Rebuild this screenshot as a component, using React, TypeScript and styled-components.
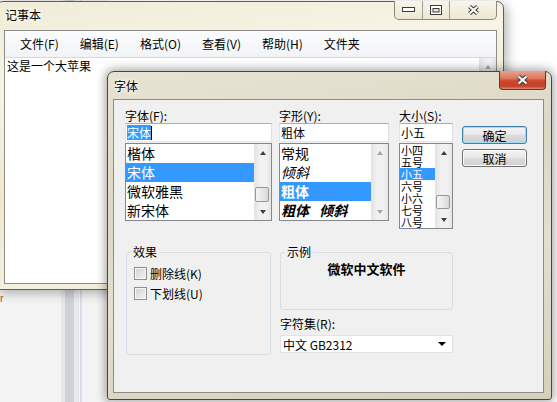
import styled, { createGlobalStyle } from 'styled-components';

const CJK = `"Noto Sans CJK SC", "Liberation Sans", sans-serif`;

const GlobalStyle = createGlobalStyle`
  html, body { margin: 0; padding: 0; background: #ffffff; }
  body { font-family: ${CJK}; font-size: 12px; color: #000; }
  * { box-sizing: border-box; }
`;

const Desktop = styled.div`
  position: relative;
  width: 557px;
  height: 402px;
  overflow: hidden;
  background: #ffffff;
`;

// the browser page that peeks out under the notepad window
const BehindPage = styled.div`
  position: absolute;
  left: 0;
  top: 0;
  width: 110px;
  height: 402px;
  background: linear-gradient(
    90deg,
    #f4f4f4 0 61px,
    #e7e7ef 61px 65px,
    #d1d1d8 65px 74px,
    #e9e9f0 74px 79px,
    #f4f4f4 79px 80px,
    #dcdce8 80px 82px,
    #f4f4f4 82px
  );
`;

const BehindText = styled.div`
  margin: 292px 0 0 0;
  color: #c2502a;
  font-family: "Liberation Sans", sans-serif;
  font-size: 11px;
`;

/* ---------- notepad ---------- */

const NotepadWindow = styled.div`
  position: absolute;
  left: -4px;
  top: 1px;
  width: 508px;
  height: 289px;
  display: flex;
  flex-direction: column;
  padding: 0 6px 5px 7px;
  border: 1px solid #5f5e57;
  border-radius: 7px 7px 0 0;
  background: linear-gradient(172deg, #f1ecd6 0%, #f7f4e6 25%, #eee8ce 55%, #f4f0de 80%, #ede6cb 100%);
  box-shadow: 3px 3px 12px rgba(0, 0, 0, 0.3);
`;

const TitleRow = styled.div<{ $h: number }>`
  height: ${(p) => p.$h}px;
  flex: none;
  display: flex;
  justify-content: space-between;
  align-items: flex-start;
`;

const WindowTitle = styled.div<{ $top: number }>`
  margin-top: ${(p) => p.$top}px;
  padding-left: 1px;
  line-height: 14px;
  font-size: 12px;
  text-shadow: 0 0 6px #fff, 0 0 3px #fff;
`;

const CaptionGroup = styled.div`
  display: flex;
  height: 19px;
  margin-top: -1px;
  border: 1px solid #8b8980;
  border-top: none;
  border-radius: 0 0 5px 5px;
  background: linear-gradient(#f8f6ec, #ece7d2);
  overflow: hidden;
`;

const CaptionButton = styled.div<{ $w: number }>`
  width: ${(p) => p.$w}px;
  display: flex;
  align-items: center;
  justify-content: center;
  & + & {
    border-left: 1px solid #a3a197;
  }
`;

const NotepadClient = styled.div`
  flex: 1;
  display: flex;
  flex-direction: column;
  border: 1px solid #8c8d88;
  background: #fff;
`;

const MenuBar = styled.div`
  height: 27px;
  flex: none;
  display: flex;
  align-items: center;
  padding-left: 5px;
  background: linear-gradient(#fbfcfd, #f1f3f6);
  border-bottom: 1px solid #d8d8d8;
`;

const MenuItem = styled.span`
  padding: 0 10px;
  margin-right: 1px;
  line-height: 18px;
  font-size: 12px;
`;

const EditArea = styled.div`
  flex: 1;
  display: flex;
`;

const EditText = styled.div`
  flex: 1;
  padding: 0 2px;
  line-height: 16px;
  font-size: 12px;
`;

/* ---------- scrollbars ---------- */

const ScrollBar = styled.div`
  width: 17px;
  flex: none;
  display: flex;
  flex-direction: column;
  background: linear-gradient(90deg, #e2e2e2, #f1f1f1 35%, #f1f1f1 70%, #e6e6e6);
`;

const ScrollArrow = styled.div`
  height: 17px;
  flex: none;
  display: flex;
  align-items: center;
  justify-content: center;
`;

const ArrowGlyph = styled.span<{ $dir: 'up' | 'down'; $disabled?: boolean }>`
  width: 0;
  height: 0;
  border-left: 3.5px solid transparent;
  border-right: 3.5px solid transparent;
  ${(p) =>
    p.$dir === 'up'
      ? `border-bottom: 4px solid ${p.$disabled ? '#a6a6a6' : '#3f3f3f'};`
      : `border-top: 4px solid ${p.$disabled ? '#a6a6a6' : '#3f3f3f'};`}
`;

const ScrollTrack = styled.div`
  flex: 1;
  display: flex;
  flex-direction: column;
`;

const ScrollThumb = styled.div<{ $offset: number; $size: number }>`
  margin: ${(p) => p.$offset}px 2px 0 1px;
  height: ${(p) => p.$size}px;
  border: 1px solid #979797;
  border-radius: 2px;
  background: linear-gradient(90deg, #f4f4f4, #e9e9e9 50%, #d8d8d8);
`;

function Scroller({ thumb, disabled }: { thumb?: [number, number]; disabled?: boolean }) {
  return (
    <ScrollBar>
      <ScrollArrow>
        <ArrowGlyph $dir="up" $disabled={disabled} />
      </ScrollArrow>
      <ScrollTrack>{thumb && <ScrollThumb $offset={thumb[0]} $size={thumb[1]} />}</ScrollTrack>
      <ScrollArrow>
        <ArrowGlyph $dir="down" $disabled={disabled} />
      </ScrollArrow>
    </ScrollBar>
  );
}

/* ---------- font dialog ---------- */

const FontDialog = styled.div`
  position: absolute;
  left: 107px;
  top: 71px;
  width: 445px;
  height: 329px;
  display: flex;
  flex-direction: column;
  padding: 0 7px 6px 5px;
  border: 1px solid #47463f;
  border-radius: 7px 7px 3px 3px;
  background: linear-gradient(170deg, #e7e3d3 0%, #ddd8c4 35%, #e3dfcf 60%, #d6d0ba 100%);
  box-shadow: 0 0 10px 2px rgba(0, 0, 0, 0.35);
`;

const RedClose = styled.div`
  width: 47px;
  height: 19px;
  margin: -1px -2px 0 0;
  display: flex;
  align-items: center;
  justify-content: center;
  border: 1px solid #5b3a30;
  border-top: none;
  border-radius: 0 0 4px 4px;
  background: linear-gradient(#e9a090 0%, #de7a62 40%, #cc4528 55%, #c4432b 85%, #de8a72 100%);
`;

const DialogClient = styled.div`
  flex: 1;
  display: flex;
  flex-direction: column;
  padding: 8px 0 0 11px;
  background: #f0f0f0;
  border: 1px solid #8f8c83;
`;

const TopRow = styled.div`
  height: 122px;
  flex: none;
  display: flex;
`;

const FieldColumn = styled.div<{ $w: number; $mr?: number }>`
  width: ${(p) => p.$w}px;
  margin-right: ${(p) => p.$mr ?? 0}px;
  flex: none;
  display: flex;
  flex-direction: column;
`;

const FieldLabel = styled.div`
  height: 15px;
  line-height: 15px;
  font-size: 12px;
  white-space: nowrap;
`;

const TextBox = styled.div`
  height: 19px;
  display: flex;
  align-items: center;
  padding: 0 1px;
  background: #fff;
  border: 1px solid;
  border-color: #abadb3 #dbdfe6 #e3e9ef #e2e3ea;
  font-size: 12px;
  white-space: nowrap;
`;

const Selected = styled.span`
  background: #3399ff;
  color: #fff;
  line-height: 15px;
`;

const Caret = styled.span`
  width: 1px;
  height: 14px;
  background: #000;
`;

const ListBox = styled.div<{ $h: number }>`
  height: ${(p) => p.$h}px;
  margin-top: 1px;
  display: flex;
  border: 1px solid #828790;
  background: #fff;
  overflow: hidden;
`;

const ListItems = styled.div`
  flex: 1;
  overflow: hidden;
`;

const ListItem = styled.div<{
  $selected?: boolean;
  $h: number;
  $size: number;
  $bold?: boolean;
  $italic?: boolean;
}>`
  height: ${(p) => p.$h}px;
  line-height: ${(p) => p.$h}px;
  padding-left: 1px;
  font-size: ${(p) => p.$size}px;
  font-weight: ${(p) => (p.$bold ? 700 : 400)};
  font-style: ${(p) => (p.$italic ? 'italic' : 'normal')};
  white-space: pre;
  background: ${(p) => (p.$selected ? '#3399ff' : 'transparent')};
  color: ${(p) => (p.$selected ? '#fff' : '#000')};
`;

const ButtonColumn = styled.div`
  width: 65px;
  flex: none;
  display: flex;
  flex-direction: column;
  gap: 5px;
  padding-top: 18px;
`;

const PushButton = styled.div<{ $default?: boolean }>`
  height: 18px;
  display: flex;
  align-items: center;
  justify-content: center;
  font-size: 12px;
  border: 1px solid ${(p) => (p.$default ? '#3c7fb1' : '#707070')};
  border-radius: 3px;
  background: linear-gradient(#f2f2f2 0%, #ebebeb 45%, #dddddd 50%, #cfcfcf 100%);
  box-shadow: inset 0 0 0 1px ${(p) => (p.$default ? '#9fdcf7' : '#fbfbfb')};
`;

const LowerRow = styled.div`
  margin: 15px 0 0 1px;
  display: flex;
`;

const GroupBox = styled.fieldset<{ $w: number; $h: number }>`
  width: ${(p) => p.$w}px;
  height: ${(p) => p.$h}px;
  margin: 0;
  padding: 0 4px;
  min-width: 0;
  border: 1px solid #d5dfe5;
  border-radius: 3px;
  display: flex;
  flex-direction: column;
`;

const GroupLegend = styled.legend`
  padding: 0 2px;
  font-size: 12px;
  line-height: 14px;
`;

const CheckList = styled.div`
  padding: 4px 0 0 3px;
  display: flex;
  flex-direction: column;
`;

const CheckRow = styled.div`
  height: 20px;
  display: flex;
  align-items: center;
  gap: 3px;
  font-size: 12px;
`;

const CheckBox = styled.span`
  width: 13px;
  height: 13px;
  border: 1px solid #8e8f8f;
  background: linear-gradient(135deg, #cfd1d4, #f4f4f4);
  box-shadow: inset 0 0 0 1px #f6f6f6;
`;

const RightColumn = styled.div`
  width: 173px;
  margin-left: 9px;
  display: flex;
  flex-direction: column;
`;

const SampleText = styled.div`
  flex: 1;
  display: flex;
  align-items: center;
  justify-content: center;
  padding-bottom: 2px;
  font-size: 13px;
  font-weight: 700;
`;

const CharsetLabel = styled.div`
  margin-top: 7px;
  line-height: 14px;
  font-size: 12px;
`;

const ComboBox = styled.div`
  height: 18px;
  margin-top: 4px;
  display: flex;
  align-items: center;
  justify-content: space-between;
  padding: 0 6px 0 2px;
  background: #fff;
  border: 1px solid #dfe3e8;
  font-size: 12px;
`;

const DropArrow = styled.span`
  width: 0;
  height: 0;
  border-left: 4px solid transparent;
  border-right: 4px solid transparent;
  border-top: 4px solid #000;
`;

/* ---------- glyphs ---------- */

const CloseX = () => (
  <svg width="13" height="10" viewBox="0 0 13 10">
    <path d="M2.5 1.5 L10.5 8.5 M10.5 1.5 L2.5 8.5" stroke="#3b3b3b" strokeWidth="4.2" />
    <path d="M2.5 1.5 L10.5 8.5 M10.5 1.5 L2.5 8.5" stroke="#ffffff" strokeWidth="2.2" />
  </svg>
);

const MinGlyph = () => (
  <svg width="13" height="6" viewBox="0 0 13 6">
    <rect x="0.5" y="0.5" width="12" height="4" fill="#fff" stroke="#3b3b3b" />
  </svg>
);

const MaxGlyph = () => (
  <svg width="12" height="10" viewBox="0 0 12 10">
    <rect x="0.5" y="0.5" width="11" height="9" fill="#fff" stroke="#3b3b3b" />
    <rect x="3" y="3.5" width="6" height="3.5" fill="#e8e4d2" stroke="#3b3b3b" />
  </svg>
);

const menus = ['文件(F)', '编辑(E)', '格式(O)', '查看(V)', '帮助(H)', '文件夹'];

const fonts = [
  { name: '楷体' },
  { name: '宋体', selected: true },
  { name: '微软雅黑' },
  { name: '新宋体' },
];

const styles = [
  { name: '常规' },
  { name: '倾斜', italic: true },
  { name: '粗体', bold: true, selected: true },
  { name: '粗体\u2002 倾斜', bold: true, italic: true },
];

const sizes = ['小四', '五号', '小五', '六号', '小六', '七号', '八号'];

export default function App() {
  return (
    <>
      <GlobalStyle />
      <Desktop>
        <BehindPage>
          <BehindText>r</BehindText>
        </BehindPage>

        <NotepadWindow>
          <TitleRow $h={28}>
            <WindowTitle $top={6}>记事本</WindowTitle>
            <CaptionGroup>
              <CaptionButton $w={27}>
                <MinGlyph />
              </CaptionButton>
              <CaptionButton $w={27}>
                <MaxGlyph />
              </CaptionButton>
              <CaptionButton $w={47}>
                <CloseX />
              </CaptionButton>
            </CaptionGroup>
          </TitleRow>
          <NotepadClient>
            <MenuBar>
              {menus.map((m) => (
                <MenuItem key={m}>{m}</MenuItem>
              ))}
            </MenuBar>
            <EditArea>
              <EditText>这是一个大苹果</EditText>
              <Scroller disabled />
            </EditArea>
          </NotepadClient>
        </NotepadWindow>

        <FontDialog>
          <TitleRow $h={27}>
            <WindowTitle $top={7}>字体</WindowTitle>
            <RedClose>
              <CloseX />
            </RedClose>
          </TitleRow>
          <DialogClient>
            <TopRow>
              <FieldColumn $w={147} $mr={7}>
                <FieldLabel>字体(F):</FieldLabel>
                <TextBox>
                  <Selected>宋体</Selected>
                  <Caret />
                </TextBox>
                <ListBox $h={78}>
                  <ListItems>
                    {fonts.map((f) => (
                      <ListItem key={f.name} $h={19} $size={14} $selected={f.selected}>
                        {f.name}
                      </ListItem>
                    ))}
                  </ListItems>
                  <Scroller thumb={[26, 15]} />
                </ListBox>
              </FieldColumn>

              <FieldColumn $w={110} $mr={10}>
                <FieldLabel>字形(Y):</FieldLabel>
                <TextBox>粗体</TextBox>
                <ListBox $h={78}>
                  <ListItems>
                    {styles.map((s) => (
                      <ListItem
                        key={s.name}
                        $h={19}
                        $size={14}
                        $bold={s.bold}
                        $italic={s.italic}
                        $selected={s.selected}
                      >
                        {s.name}
                      </ListItem>
                    ))}
                  </ListItems>
                  <Scroller disabled />
                </ListBox>
              </FieldColumn>

              <FieldColumn $w={54} $mr={9}>
                <FieldLabel>大小(S):</FieldLabel>
                <TextBox>小五</TextBox>
                <ListBox $h={86}>
                  <ListItems>
                    {sizes.map((s, i) => (
                      <ListItem key={s} $h={12} $size={11} $selected={i === 2}>
                        {s}
                      </ListItem>
                    ))}
                  </ListItems>
                  <Scroller thumb={[34, 14]} />
                </ListBox>
              </FieldColumn>

              <ButtonColumn>
                <PushButton $default>确定</PushButton>
                <PushButton>取消</PushButton>
              </ButtonColumn>
            </TopRow>

            <LowerRow>
              <GroupBox $w={145} $h={110}>
                <GroupLegend>效果</GroupLegend>
                <CheckList>
                  <CheckRow>
                    <CheckBox />
                    删除线(K)
                  </CheckRow>
                  <CheckRow>
                    <CheckBox />
                    下划线(U)
                  </CheckRow>
                </CheckList>
              </GroupBox>

              <RightColumn>
                <GroupBox $w={173} $h={65}>
                  <GroupLegend>示例</GroupLegend>
                  <SampleText>微软中文软件</SampleText>
                </GroupBox>
                <CharsetLabel>字符集(R):</CharsetLabel>
                <ComboBox>
                  <span>中文 GB2312</span>
                  <DropArrow />
                </ComboBox>
              </RightColumn>
            </LowerRow>
          </DialogClient>
        </FontDialog>
      </Desktop>
    </>
  );
}
